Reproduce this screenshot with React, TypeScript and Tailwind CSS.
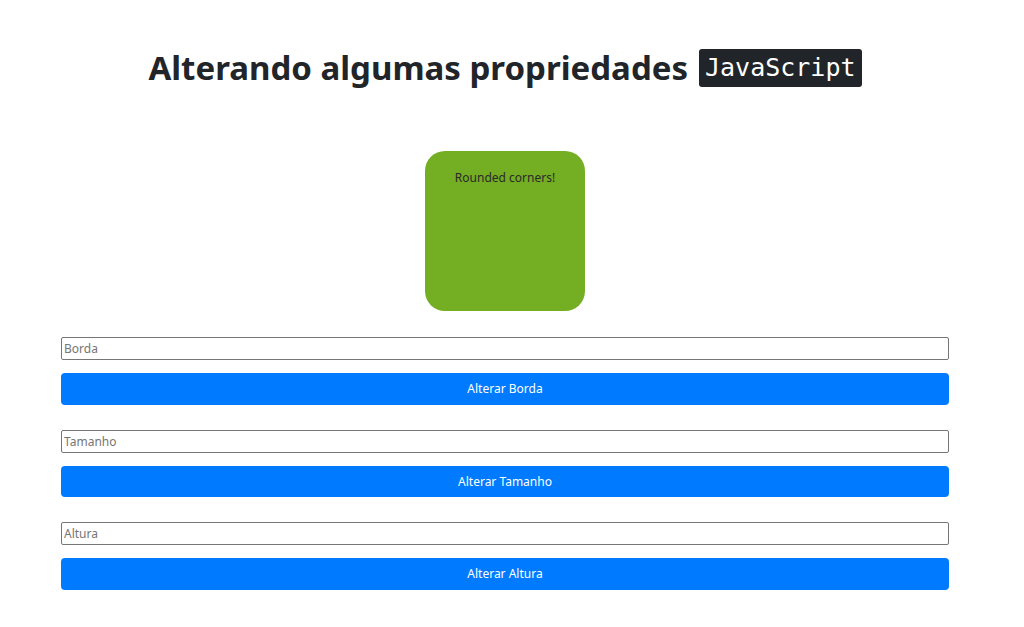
import React from "react";

export default function App() {
  const groups = [
    { ph: "Borda", label: "Alterar Borda" },
    { ph: "Tamanho", label: "Alterar Tamanho" },
    { ph: "Altura", label: "Alterar Altura" },
  ];
  return (
    <div className="min-h-[627px] w-[1010px] bg-white font-['Noto_Sans',sans-serif] text-[#212529]">
      <div className="flex justify-center pt-[46px]">
        <h1 className="flex items-center gap-[11px] text-[33px] font-bold leading-[44px] text-[#212529]">
          <span>Alterando algumas propriedades</span>
          <span className="rounded-[3px] bg-[#212529] px-[6px] py-[2px] font-['DejaVu_Sans_Mono',monospace] text-[25px] font-normal leading-[34px] text-white">
            JavaScript
          </span>
        </h1>
      </div>
      <div className="mt-[61px] flex justify-center">
        <div className="h-[160px] w-[160px] rounded-[20px] bg-[#74ae22] pt-[18px] text-center text-[12px] text-[#2a2a2a]">
          Rounded corners!
        </div>
      </div>
      <div className="mx-[61px] mt-[26px] flex flex-col gap-[25px]">
        {groups.map((g) => (
          <div key={g.ph} className="flex flex-col gap-[13px]">
            <input
              placeholder={g.ph}
              className="h-[23px] w-full rounded-[2px] border border-[#767676] px-[2px] text-[12px] text-[#212529] placeholder:text-[#757575] outline-none"
            />
            <button className="h-[31.5px] w-full rounded-[4px] bg-[#007bff] pt-[1px] text-[12px] text-white">
              {g.label}
            </button>
          </div>
        ))}
      </div>
    </div>
  );
}
